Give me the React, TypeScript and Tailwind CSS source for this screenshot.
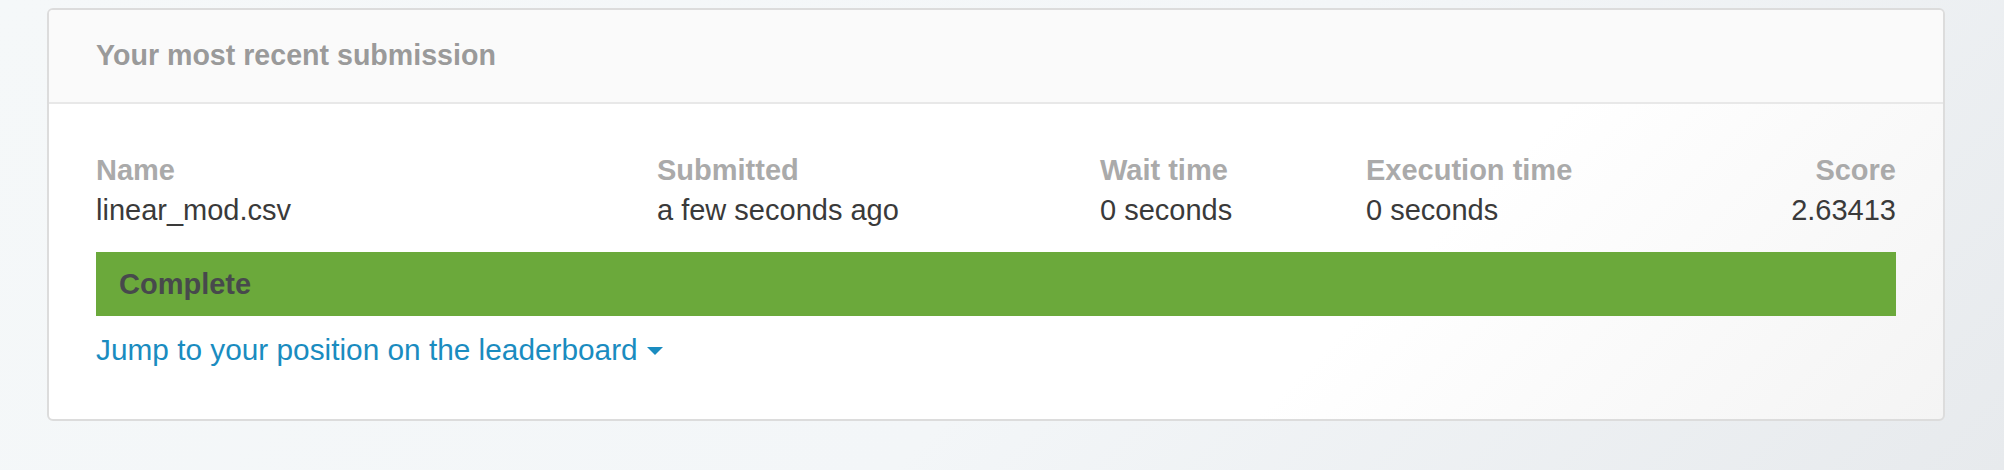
import React from 'react';

type Column = {
  label: string;
  value: string;
  align?: 'left' | 'right';
};

const columns: Column[] = [
  { label: 'Name', value: 'linear_mod.csv' },
  { label: 'Submitted', value: 'a few seconds ago' },
  { label: 'Wait time', value: '0 seconds' },
  { label: 'Execution time', value: '0 seconds' },
  { label: 'Score', value: '2.63413', align: 'right' },
];

const CaretDown = () => (
  <svg width="16" height="8" viewBox="0 0 16 8" className="ml-[9px] mt-[2px]">
    <polygon points="0,0 16,0 8,8" fill="currentColor" />
  </svg>
);

const App = () => {
  return (
    <div
      className="h-[470px] pt-[8px] pl-[47px] bg-[linear-gradient(135deg,#f5f8f9_0%,#f3f6f8_55%,#e7eaed_100%)]"
      style={{ fontFamily: '"Liberation Sans", Arial, sans-serif' }}
    >
      <div className="w-[1898px] rounded-[6px] border-2 border-[#dcdcdc] bg-[linear-gradient(135deg,#ffffff_0%,#ffffff_70%,#f4f4f4_100%)] overflow-hidden">
        {/* header */}
        <div className="h-[94px] px-[47px] pt-[25px] bg-[#fafafa] border-b-2 border-[#e8e8e8]">
          <h2 className="text-[28.6px] leading-[40px] font-bold text-[#9a9a9a]">
            Your most recent submission
          </h2>
        </div>

        {/* body */}
        <div className="px-[47px] pt-[46px] pb-[49px]">
          <div className="grid grid-cols-[561px_443px_266px_1fr_auto]">
            {columns.map((col) => (
              <div key={col.label} className={col.align === 'right' ? 'text-right' : ''}>
                <div className="text-[29px] leading-[40px] font-bold text-[#aaaaaa]">{col.label}</div>
                <div className="text-[29px] leading-[40px] text-[#3a3a3a]">{col.value}</div>
              </div>
            ))}
          </div>

          <div className="mt-[22px] h-[64px] flex items-center px-[23px] bg-[#6ba93b]">
            <span className="text-[29px] leading-[40px] font-bold text-[#47494c]">Complete</span>
          </div>

          <a href="#" className="mt-[14px] flex items-center w-fit text-[29.8px] leading-[40px] text-[#1a8cc0]">
            Jump to your position on the leaderboard
            <CaretDown />
          </a>
        </div>
      </div>
    </div>
  );
};

export default App;
